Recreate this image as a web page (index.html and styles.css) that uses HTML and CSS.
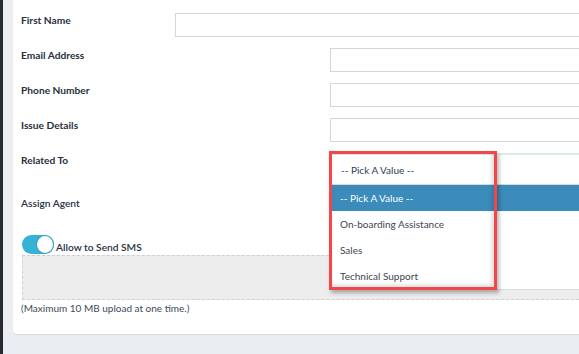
FILE: index.html
```html
<!DOCTYPE html>
<html lang="en">
<head>
  <meta charset="UTF-8">
  <title>New Ticket</title>
  <link rel="stylesheet" href="styles.css">
</head>
<body>

  <div class="sidebar-edge"></div>

  <main class="page">
    <form class="card" id="ticketForm">

      <div class="row">
        <label class="lbl lbl-short" for="firstName">First Name</label>
        <input class="field" type="text" id="firstName" name="firstName">
      </div>

      <div class="row">
        <label class="lbl" for="email">Email Address</label>
        <input class="field" type="email" id="email" name="email">
      </div>

      <div class="row">
        <label class="lbl" for="phone">Phone Number</label>
        <input class="field" type="text" id="phone" name="phone">
      </div>

      <div class="row">
        <label class="lbl" for="issue">Issue Details</label>
        <input class="field" type="text" id="issue" name="issue">
      </div>

      <div class="row row-related">
        <label class="lbl">Related To</label>
        <div class="field select-box"></div>
      </div>

      <div class="row">
        <label class="lbl lbl-light">Assign Agent</label>
        <div class="field blank"></div>
      </div>

      <div class="sms">
        <span class="toggle"><span class="knob"></span></span>
        <span class="sms-text">Allow to Send SMS</span>
      </div>

      <div class="dropzone"></div>
      <p class="note">(Maximum 10 MB upload at one time.)</p>

    </form>
  </main>

  <!-- open dropdown of "Related To" -->
  <div class="dropdown">
    <div class="dd-current">-- Pick A Value --</div>
    <ul class="dd-list">
      <li class="active">-- Pick A Value --</li>
      <li>On-boarding Assistance</li>
      <li>Sales</li>
      <li>Technical Support</li>
    </ul>
  </div>
  <div class="highlight"></div>

</body>
</html>
```

FILE: styles.css
```css
* {
  box-sizing: border-box;
}

body {
  margin: 0;
  height: 354px;
  overflow: hidden;
  display: flex;
  background-color: #eaedf2;
  font-family: Lato, "Open Sans", sans-serif;
  position: relative;
}

.sidebar-edge {
  width: 3px;
  background-color: #262b33;
}

.page {
  flex: 1;
  padding-left: 10px;
  min-width: 0;
}

.card {
  background-color: #fff;
  height: 334px;
  border-radius: 0 0 4px 4px;
  box-shadow: 0 1px 1px rgba(0, 0, 0, 0.08);
  padding: 13px 0 0 8px;
  margin-right: -20px;
}

.row {
  display: flex;
  height: 24px;
  margin-bottom: 11px;
}

.row-related {
  margin-bottom: 19px;
}

.lbl {
  width: 309px;
  flex: none;
  font-size: 10.2px;
  font-weight: bold;
  line-height: 14px;
  color: #27303d;
}

.lbl-short {
  width: 154px;
}

.lbl-light {
  font-weight: 600;
}

.field {
  flex: 1;
  height: 24px;
  border: 1px solid #d3d6de;
  background: #fff;
  font: inherit;
}

.blank {
  border-color: transparent;
}

.sms {
  display: flex;
  align-items: flex-end;
  gap: 2px;
  margin: 15px 0 0 1px;
  height: 20px;
  position: relative;
  z-index: 1;
}

.toggle {
  width: 32px;
  height: 19px;
  align-self: flex-start;
  border-radius: 10px;
  background-color: #34b3d6;
  position: relative;
}

.knob {
  position: absolute;
  right: 0;
  top: 0;
  width: 18px;
  height: 19px;
  border-radius: 50%;
  background: #fff;
  border: 1px solid #2d9fc2;
}

.sms-text {
  font-size: 10.2px;
  font-weight: 600;
  line-height: 14px;
  margin-bottom: 1px;
  color: #27303d;
}

.dropzone {
  margin-left: 1px;
  height: 45px;
  background-color: #ededed;
  border: 1px dashed #cfcfcf;
}

.note {
  margin: 1px 0 0;
  font-size: 10px;
  line-height: 14px;
  color: #3b4a5c;
}

.dropdown {
  position: absolute;
  left: 330px;
  top: 153px;
  width: 270px;
  background: #fff;
  border-top: 2px solid #d4eee5;
  border-bottom: 1px solid #d9dbe0;
  font-size: 10px;
}

.dd-current {
  height: 30px;
  line-height: 30px;
  padding-left: 11px;
  color: #2c3e50;
  border-bottom: 1px solid #d8d8d8;
}

.dd-list {
  list-style: none;
  margin: 0;
  padding: 0;
}

.dd-list li {
  height: 26px;
  line-height: 26px;
  padding-left: 10px;
  color: #404550;
}

.dd-list li.active {
  background-color: #3b8bbb;
  color: #fff;
}

.highlight {
  position: absolute;
  left: 329px;
  top: 151px;
  width: 168px;
  height: 139px;
  border: 3px solid #f2474a;
  box-shadow: 2px 3px 4px rgba(0, 0, 0, 0.3), inset -2px -2px 4px rgba(0, 0, 0, 0.15);
}
```
